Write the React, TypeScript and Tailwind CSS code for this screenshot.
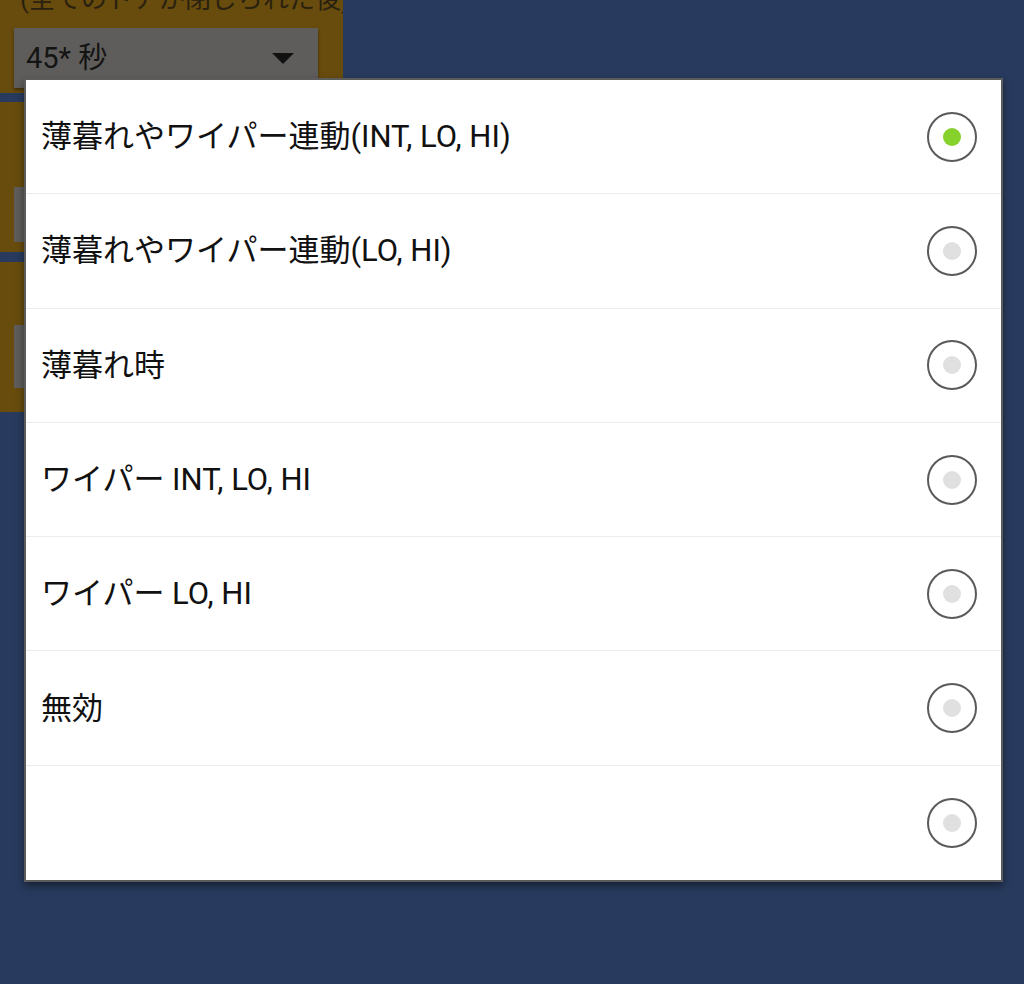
import React from "react";

interface OptionRowProps {
    label: string;
    selected?: boolean;
    last?: boolean;
}

const OptionRow: React.FC<OptionRowProps> = ({ label, selected, last }) => (
    <div
        className={`flex h-[114.3px] items-center justify-between pl-[15px] pr-[24px] ${
            last ? "" : "border-b border-[#ececec]"
        }`}
    >
        <span className="text-[31px] leading-none text-[#111]">{label}</span>
        <div className="flex h-[50px] w-[50px] items-center justify-center rounded-full border-2 border-[#5a5a5a]">
            <div
                className={`h-[18px] w-[18px] rounded-full ${
                    selected ? "bg-[#86d12c]" : "bg-[#e0e0e0]"
                }`}
            />
        </div>
    </div>
);

const options = [
    "薄暮れやワイパー連動(INT, LO, HI)",
    "薄暮れやワイパー連動(LO, HI)",
    "薄暮れ時",
    "ワイパー INT, LO, HI",
    "ワイパー LO, HI",
    "無効",
    "",
];

export default function App() {
    return (
        <div
            className="relative h-[984px] w-[1024px] overflow-hidden bg-[#283b5e]"
            style={{ fontFamily: '"Roboto", "Noto Sans CJK JP", sans-serif' }}
        >
            {/* Dimmed settings page behind the dialog */}
            <div className="flex w-[343px] flex-col">
                <div className="h-[93px] overflow-hidden bg-[#684c0d] pl-[20px]">
                    <div className="mt-[-14px] whitespace-nowrap text-[26px] leading-[26px] text-[#2a2110]">
                        (全てのドアが閉じられた後)
                    </div>
                    <div className="ml-[-6px] mt-[16px] flex h-[60px] w-[304px] items-center justify-between bg-[#5e5d5b] pl-[12px] pr-[24px] shadow-[0_2px_3px_rgba(0,0,0,0.4)]">
                        <span className="text-[29px] leading-none text-[#141414]">
                            45* 秒
                        </span>
                        <span className="h-0 w-0 border-x-[11px] border-t-[11px] border-x-transparent border-t-[#111]" />
                    </div>
                </div>
                <div className="mt-[9px] h-[150px] bg-[#684c0d] pl-[14px] pt-[85px]">
                    <div className="h-[55px] w-[20px] bg-[#5e5d5b]" />
                </div>
                <div className="mt-[10px] h-[150px] bg-[#684c0d] pl-[14px] pt-[63px]">
                    <div className="h-[63px] w-[20px] bg-[#5e5d5b]" />
                </div>
            </div>

            {/* Dialog */}
            <div className="absolute left-[24px] top-[78px] w-[979px] border-2 border-[#5c5c5c] bg-white shadow-[0_4px_8px_rgba(0,0,0,0.45)]">
                {options.map((label, i) => (
                    <OptionRow
                        key={i}
                        label={label}
                        selected={i === 0}
                        last={i === options.length - 1}
                    />
                ))}
            </div>
        </div>
    );
}
